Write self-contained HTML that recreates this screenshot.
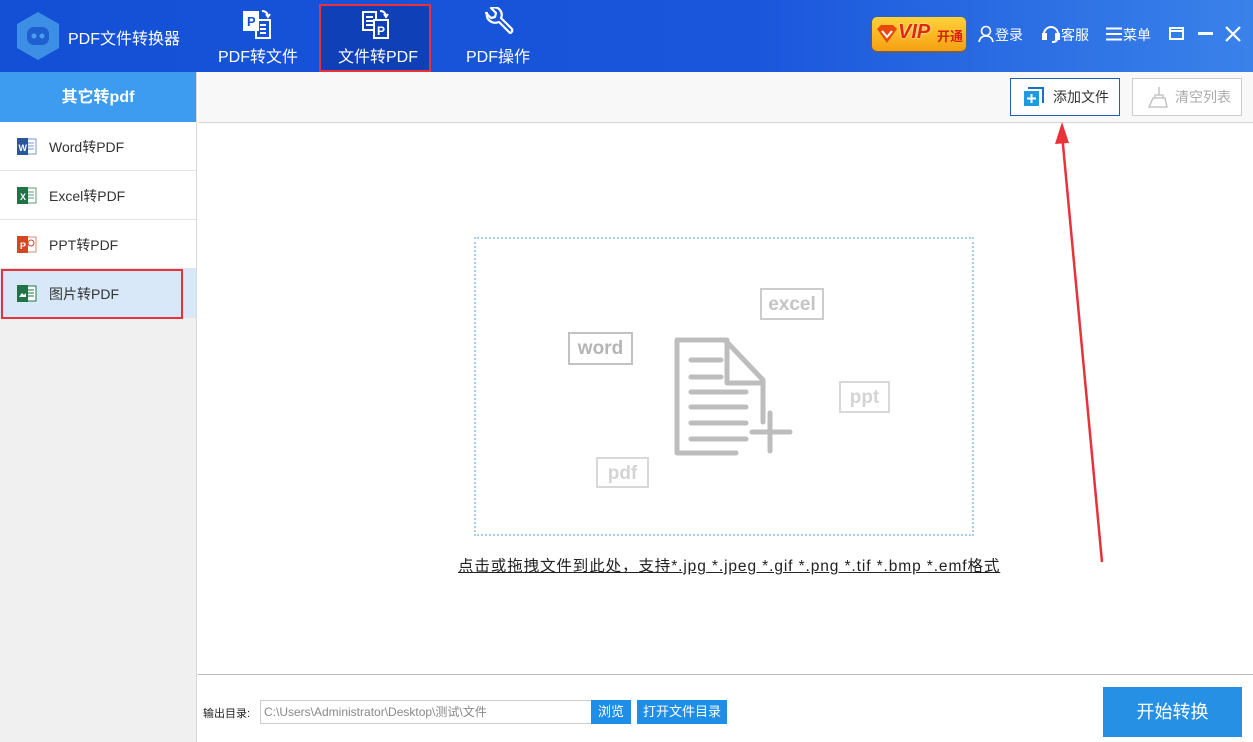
<!DOCTYPE html>
<html><head><meta charset="utf-8"><style>
*{margin:0;padding:0;box-sizing:border-box}
body{width:1253px;height:742px;overflow:hidden;font-family:"Liberation Sans","Noto Sans CJK SC",sans-serif;background:#fff;position:relative}
.hdr{position:absolute;left:0;top:0;width:1253px;height:72px;background:linear-gradient(90deg,#1450d6 0%,#1a56dc 60%,#3a82ea 100%)}
.abs{position:absolute}
.t{color:#fff;font-size:16px}
.side{position:absolute;left:0;top:72px;width:197px;height:670px;background:#f0f0f0;border-right:1px solid #d8d8d8}
.stitle{height:50px;background:#3d9bf0;color:#fff;font-weight:bold;font-size:16px;text-align:center;line-height:51px}
.item{height:49px;background:#fff;border-bottom:1px solid #e4e4e4;font-size:14px;color:#333;line-height:51px;padding-left:49px;position:relative}
.item .ic{position:absolute;left:17px;top:15px;width:20px;height:19px}
.tb{position:absolute;left:198px;top:72px;width:1055px;height:51px;background:#f8f8f8;border-bottom:1px solid #d4d4d4}
.btn{position:absolute;height:38px;font-size:14px;line-height:36px;background:#fff}
.tag{position:absolute;border:2px solid #ccc;color:#c4c4c4;font-weight:bold;font-size:19px;text-align:center;line-height:30px}
</style></head><body>
<div class="hdr"></div>
<svg class="abs" style="left:14px;top:11px" width="48" height="50" viewBox="0 0 48 50"><polygon points="24,1 45,13 45,37 24,49 3,37 3,13" fill="#3d8fe6"/><rect x="13" y="16" width="22" height="18" rx="7" fill="#1f5fd0"/><circle cx="20" cy="25" r="2.5" fill="#4aa0f0"/><circle cx="28" cy="25" r="2.5" fill="#4aa0f0"/></svg>
<div class="abs t" style="left:68px;top:25px;font-size:16px">PDF文件转换器</div>
<svg class="abs" style="left:242px;top:8px" width="32" height="32" viewBox="0 0 32 32" fill="none" stroke="#fff" stroke-width="2"><rect x="2" y="4" width="14" height="18" fill="#fff"/><text x="5" y="18" font-size="13" font-weight="bold" fill="#1550d8" stroke="none" font-family="Liberation Sans">P</text><rect x="14" y="12" width="14" height="18"/><path d="M18 17h6M18 21h6M18 25h6"/><path d="M20 3q5 0 6 5M24 6l2 3 2-3"/></svg>
<div class="abs t" style="left:218px;top:43px">PDF转文件</div>
<div class="abs" style="left:319px;top:4px;width:112px;height:68px;background:#0f40b8;border:2px solid #e8323a"></div>
<svg class="abs" style="left:360px;top:8px" width="32" height="32" viewBox="0 0 32 32" fill="none" stroke="#fff" stroke-width="2"><rect x="3" y="4" width="13" height="18"/><path d="M6 9h7M6 13h7M6 17h7"/><rect x="14" y="12" width="14" height="18" fill="#0f40b8"/><text x="17" y="27" font-size="12" font-weight="bold" fill="#fff" stroke="none" font-family="Liberation Sans">P</text><path d="M20 3q5 0 6 5M24 6l2 3 2-3"/></svg>
<div class="abs t" style="left:338px;top:43px">文件转PDF</div>
<svg class="abs" style="left:480px;top:7px" width="34" height="34" viewBox="0 0 34 34" fill="none" stroke="#fff" stroke-width="2.2" stroke-linejoin="round"><path d="M6 6l5 5 4-1 1-4-5-5q6-2 9 2 3 4 1 8l11 11q1 3-2 4l-11-11q-5 2-9-1-4-3-3-8z"/></svg>
<div class="abs t" style="left:466px;top:43px">PDF操作</div>
<div class="abs" style="left:872px;top:17px;width:94px;height:34px;border-radius:5px;background:linear-gradient(#ffd23a,#f5a012);box-shadow:0 1px 2px #a05a00"></div>
<svg class="abs" style="left:876px;top:23px" width="22" height="22" viewBox="0 0 22 22"><path d="M1 6l10 14L21 6l-4-4H5z" fill="#e84a0c"/><path d="M6 8l5 6 5-6" stroke="#fff" stroke-width="2" fill="none"/></svg>
<div class="abs" style="left:898px;top:21px;color:#e02a10;font-weight:bold;font-size:20px;font-style:italic;text-shadow:0 0 2px #fff">VIP</div>
<div class="abs" style="left:937px;top:26px;color:#d8200e;font-weight:bold;font-size:13px">开通</div>
<svg class="abs" style="left:978px;top:25px" width="16" height="18" viewBox="0 0 16 18" fill="none" stroke="#fff" stroke-width="1.6"><circle cx="8" cy="6" r="4.5"/><path d="M1 17q1-6 7-6t7 6"/></svg>
<div class="abs t" style="left:995px;top:25px;font-size:14px">登录</div>
<svg class="abs" style="left:1042px;top:25px" width="18" height="18" viewBox="0 0 18 18" fill="none" stroke="#fff" stroke-width="2"><path d="M2 11V9a7 7 0 0 1 14 0v2"/><rect x="1" y="9" width="3" height="5" fill="#fff"/><rect x="14" y="9" width="3" height="5" fill="#fff"/><path d="M15 14q0 3-5 3"/></svg>
<div class="abs t" style="left:1061px;top:25px;font-size:14px">客服</div>
<svg class="abs" style="left:1106px;top:27px" width="16" height="14"><path d="M0 1.5h16M0 7h16M0 12.5h16" stroke="#fff" stroke-width="2"/></svg>
<div class="abs t" style="left:1123px;top:25px;font-size:14px">菜单</div>
<svg class="abs" style="left:1169px;top:27px" width="16" height="14"><rect x="1" y="1" width="13" height="11" fill="none" stroke="#fff" stroke-width="2"/><path d="M1 4h13" stroke="#fff" stroke-width="2"/></svg>
<svg class="abs" style="left:1198px;top:32px" width="16" height="4"><rect width="15" height="3" fill="#fff"/></svg>
<svg class="abs" style="left:1225px;top:26px" width="16" height="16"><path d="M1 1l14 14M15 1L1 15" stroke="#fff" stroke-width="2.2"/></svg>

<div class="side">
<div class="stitle">其它转pdf</div>
<div class="item"><svg class="ic" viewBox="0 0 20 19"><rect x="8" y="2" width="11" height="15" fill="#fff" stroke="#7b95c9"/><path d="M11 6h6M11 9h6M11 12h6" stroke="#7b95c9"/><rect x="0" y="1" width="11" height="17" fill="#2b579a"/><text x="1.5" y="14" font-size="9" fill="#fff" font-weight="bold">W</text></svg>Word转PDF</div>
<div class="item"><svg class="ic" viewBox="0 0 20 19"><rect x="8" y="2" width="11" height="15" fill="#fff" stroke="#5a9e72"/><path d="M11 6h6M11 9h6M11 12h6" stroke="#5a9e72"/><rect x="0" y="1" width="11" height="17" fill="#217346"/><text x="3" y="14" font-size="9" fill="#fff" font-weight="bold">X</text></svg>Excel转PDF</div>
<div class="item"><svg class="ic" viewBox="0 0 20 19"><rect x="8" y="2" width="11" height="15" fill="#fff" stroke="#d88a70"/><circle cx="14" cy="8" r="3" fill="none" stroke="#d24726"/><rect x="0" y="1" width="11" height="17" fill="#d24726"/><text x="3" y="14" font-size="9" fill="#fff" font-weight="bold">P</text></svg>PPT转PDF</div>
<div class="item" style="background:#d8e8f8"><svg class="ic" viewBox="0 0 20 19"><rect x="8" y="2" width="11" height="15" fill="#fff" stroke="#217346"/><path d="M11 6h6M11 9h6M11 12h6" stroke="#217346"/><rect x="0" y="1" width="11" height="17" fill="#217346"/><path d="M2 13l3-4 2 2 2-2v4z" fill="#fff"/></svg>图片转PDF</div>
</div>
<div class="abs" style="left:1px;top:269px;width:182px;height:50px;border:2px solid #e8323a"></div>

<div class="tb"></div>
<div class="btn" style="left:1010px;top:78px;width:110px;border:1px solid #1d5fb8;padding-left:42px;color:#333">添加文件</div>
<svg class="abs" style="left:1024px;top:87px" width="20" height="20"><path d="M4 1h15v15" stroke="#1d6fc0" stroke-width="2" fill="none"/><rect x="0" y="4" width="15" height="15" fill="#1e9ae0"/><path d="M7.5 7v9M3 11.5h9" stroke="#fff" stroke-width="2"/></svg>
<div class="btn" style="left:1132px;top:78px;width:110px;border:1px solid #ccc;padding-left:42px;color:#aaa">清空列表</div>
<svg class="abs" style="left:1148px;top:86px" width="20" height="22" viewBox="0 0 20 22" fill="none" stroke="#bbb" stroke-width="1.3"><path d="M11 1v8M7 9h8v3H7zM5 12h12l2 9H1z"/></svg>

<div class="abs" style="left:474px;top:237px;width:500px;height:299px;border:2px dotted #a8ccec"></div>
<div class="tag" style="left:568px;top:332px;width:65px;height:33px;color:#b5b5b5;border-color:#c2c2c2">word</div>
<div class="tag" style="left:760px;top:288px;width:64px;height:32px">excel</div>
<div class="tag" style="left:839px;top:381px;width:51px;height:32px;color:#d4d4d4;border-color:#d8d8d8">ppt</div>
<div class="tag" style="left:596px;top:457px;width:53px;height:31px;color:#d4d4d4;border-color:#d8d8d8">pdf</div>
<svg class="abs" style="left:670px;top:333px" width="126" height="128" viewBox="670 333 126 128" fill="none" stroke="#bdbdbd" stroke-width="5" stroke-linecap="round" stroke-linejoin="round"><path d="M736 453H677V340h48l38 40v42"/><path d="M727 340v43h35"/><path d="M691 360h30M691 377h30M691 392h55M691 407h55M691 423h55M691 439h55"/><path d="M770 413v38M752 432h38"/></svg>
<div class="abs" style="left:458px;top:554px;font-size:15.5px;letter-spacing:0.9px;color:#222;text-decoration:underline;white-space:nowrap">点击或拖拽文件到此处，支持*.jpg *.jpeg *.gif *.png *.tif *.bmp *.emf格式</div>

<svg class="abs" style="left:1050px;top:118px" width="60" height="450"><path d="M52 444L12 16" stroke="#e8323a" stroke-width="2.5"/><path d="M12 4l-7 22 14-1z" fill="#e8323a"/></svg>

<div class="abs" style="left:198px;top:674px;width:1055px;height:1px;background:#bbb"></div>
<div class="abs" style="left:203px;top:705px;font-size:11px;color:#222">输出目录:</div>
<div class="abs" style="left:260px;top:700px;width:332px;height:24px;border:1px solid #ccc;font-size:12px;color:#888;line-height:22px;padding-left:3px">C:\Users\Administrator\Desktop\测试\文件</div>
<div class="abs" style="left:591px;top:700px;width:40px;height:24px;background:#1e8ee8;color:#fff;font-size:13px;text-align:center;line-height:24px">浏览</div>
<div class="abs" style="left:637px;top:700px;width:90px;height:24px;background:#1e8ee8;color:#fff;font-size:13px;text-align:center;line-height:24px">打开文件目录</div>
<div class="abs" style="left:1103px;top:687px;width:139px;height:50px;background:#2690e4;color:#fff;font-size:18px;text-align:center;line-height:50px">开始转换</div>
</body></html>
